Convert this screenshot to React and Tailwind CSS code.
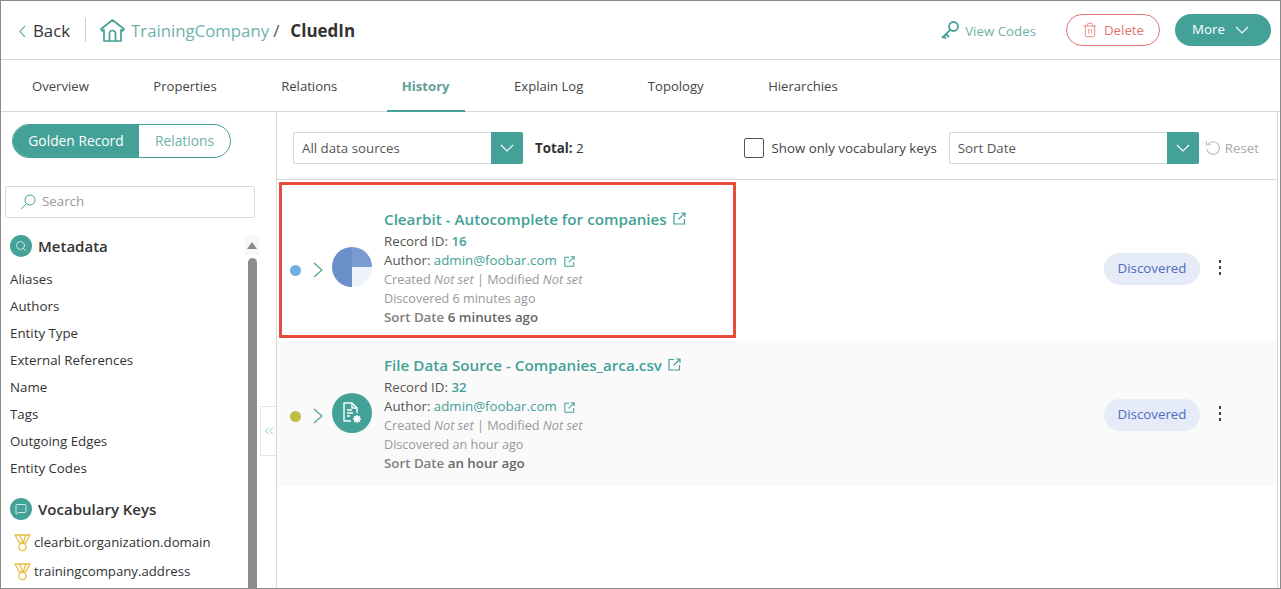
import React from "react";
import { Trash2, Search, MessageSquare, ChevronsLeft } from "lucide-react";

const TEAL = "#43a197";

function Chev({ d = "right", w = 10, h = 16, color = TEAL }) {
  const pts = {
    right: `1,1 ${w - 1},${h / 2} 1,${h - 1}`,
    left: `${w - 1},1 1,${h / 2} ${w - 1},${h - 1}`,
    down: `1,1 ${w / 2},${h - 1} ${w - 1},1`,
  }[d];
  return (
    <svg width={w} height={h} viewBox={`0 0 ${w} ${h}`} fill="none" stroke={color} strokeWidth="1.1" className="shrink-0">
      <polyline points={pts} />
    </svg>
  );
}

function Home() {
  return (
    <svg width="25" height="23" viewBox="0 0 25 23" fill="none" stroke={TEAL} strokeWidth="1.7" strokeLinejoin="round">
      <path d="M1 10 12.500 1 24 10l-1.300 1.900-1.700-1.100V22H4V10.800l-1.700 1.100z" />
      <path d="M9.500 22v-7.500a3 3 0 0 1 6 0V22" />
    </svg>
  );
}

function KeyIcon() {
  return (
    <svg width="19" height="20" viewBox="0 0 19 20" fill="none" stroke={TEAL} strokeWidth="1.8" strokeLinecap="round" className="shrink-0">
      <circle cx="12.500" cy="6.500" r="4.500" />
      <path d="M9.200 9.800 1.500 17.500M5 14l2.500 2.500M2.800 16.200l1.800 1.800" />
    </svg>
  );
}

function Undo() {
  return (
    <svg width="16" height="16" viewBox="0 0 16 16" fill="none" stroke="#bdbdbd" strokeWidth="1.1" className="shrink-0">
      <path d="M3 4.200A6.300 6.300 0 1 1 1.800 9" />
      <path d="M1.500 1v3.700h4" />
    </svg>
  );
}

function SearchGlass() {
  return (
    <svg width="16" height="16" viewBox="0 0 16 16" fill="none" stroke={TEAL} strokeWidth="1" className="shrink-0">
      <circle cx="10" cy="6" r="5" />
      <path d="M6.400 9.600 1 15" />
    </svg>
  );
}

function Medal() {
  return (
    <svg width="18" height="19" viewBox="0 0 18 19" fill="none" stroke="#e8bd45" strokeWidth="1.3" strokeLinejoin="round" className="shrink-0">
      <path d="M1 2h15l-4.500 8h-6z" />
      <path d="M5.500 2 9 10l3-8" />
      <circle cx="8.500" cy="14" r="3.700" />
    </svg>
  );
}

function Pie() {
  return (
    <svg width="40" height="40" viewBox="0 0 40 40">
      <circle cx="20" cy="20" r="20" fill="#eef3fa" />
      <path d="M20 20V0A20 20 0 0 0 20 40z" fill="#6b8fc9" />
      <path d="M20 20V0A20 20 0 0 1 40 20z" fill="#7b9ad0" />
    </svg>
  );
}

function FileGear() {
  return (
    <div className="w-10 h-10 rounded-full bg-[#43a197] flex items-center justify-center">
      <svg width="22" height="24" viewBox="0 0 22 24" fill="none" stroke="#ffffff" strokeWidth="1.4" strokeLinejoin="round">
        <path d="M10 20H3V2h8l5 5v5" />
        <path d="M11 2v5h5" />
        <path d="M6 9h5M6 12h6M6 15h3" />
        <circle cx="16" cy="18" r="2.200" fill="#ffffff" />
        <path d="M16 14v1.500M16 20.500V22M12 18h1.500M18.500 18H20M13.200 15.200l1 1M17.800 19.800l1 1M13.200 20.800l1-1M17.800 16.200l1-1" />
      </svg>
    </div>
  );
}

function SmallLink({ size = 13 }) {
  return (
    <svg width={size} height={size} viewBox="0 0 13 13" fill="none" stroke={TEAL} strokeWidth="1.2" className="shrink-0">
      <path d="M6 1.500H1V12h10.500V7" />
      <path d="M5.500 7.500 12 1M8 1h4v4" />
    </svg>
  );
}

function Row({ dot, icon, title, id, found, bg, cls }) {
  return (
    <div className={`flex items-center ${bg} ${cls}`}>
      <div className="w-6 mt-[6px] flex justify-end shrink-0">
        <span className="w-[11px] h-[11px] rounded-full" style={{ background: dot }} />
      </div>
      <span className="ml-3 mt-[6px] flex"><Chev /></span>
      <div className="ml-[9px] shrink-0 w-10 h-10">{icon}</div>
      <div className="ml-3 flex-1 flex flex-col text-[13.3px] leading-[19px]">
        <div className="flex items-center gap-[6px] text-[#43a197] text-[15.2px] font-semibold leading-[22px] mb-[2px]">
          {title}
          <SmallLink size={13} />
        </div>
        <div className="text-[#555]">Record ID: <span className="text-[#43a197] font-semibold">{id}</span></div>
        <div className="flex items-center text-[#555]">
          Author:&nbsp;<span className="text-[#43a197]">admin@foobar.com</span>
          <span className="ml-[7px] mt-[3px] flex"><SmallLink size={11} /></span>
        </div>
        <div className="text-[#999] text-[12.7px]">Created <i>Not set</i> | Modified <i>Not set</i></div>
        <div className="text-[#999] text-[12.6px]">Discovered {found}</div>
        <div className="font-semibold text-[#808080]">Sort Date <span className="text-[#666]">{found}</span></div>
      </div>
      <div className="mt-[3px] h-8 w-24 rounded-full bg-[#e6ebf8] text-[#4f6bc0] text-[13.3px] flex items-center justify-center shrink-0">Discovered</div>
      <div className="w-10 flex flex-col items-center gap-[3px] shrink-0">
        <span className="w-[2px] h-[3px] bg-[#444]" />
        <span className="w-[2px] h-[3px] bg-[#444]" />
        <span className="w-[2px] h-[3px] bg-[#444]" />
      </div>
      <div className="w-[37px] shrink-0" />
    </div>
  );
}

function Select({ label, w }) {
  return (
    <div className={`flex h-8 ${w} border border-[#d6dada] rounded-[2px] bg-white`}>
      <div className="flex-1 px-2 pt-[2px] flex items-center text-[13.3px] text-[#555]">{label}</div>
      <div className="w-8 bg-[#43a197] -my-px -mr-px rounded-r-[2px] flex items-center justify-center">
        <Chev d="down" w={14} h={8} color="#ffffff" />
      </div>
    </div>
  );
}

const meta = ["Aliases", "Authors", "Entity Type", "External References", "Name", "Tags", "Outgoing Edges", "Entity Codes"];
const tabs = ["Overview", "Properties", "Relations", "History", "Explain Log", "Topology", "Hierarchies"];

export default function App() {
  return (
    <div className="relative w-[1281px] h-[589px] overflow-hidden bg-white border border-[#8a8a8a] flex flex-col text-[#333]" style={{ fontFamily: '"Open Sans", "Noto Sans", sans-serif' }}>
      <header className="h-[59px] shrink-0 flex items-center border-b border-[#d9d9d9] pl-[18px] pr-[9px]">
        <span className="flex mt-[3px]"><Chev d="left" w={7} h={13} /></span>
        <span className="ml-[7px] mt-[2px] text-[16.800px] text-[#333]">Back</span>
        <span className="ml-[15px] w-px h-6 bg-[#d0d0d0]" />
        <span className="ml-[14px] flex"><Home /></span>
        <span className="ml-[6px] mt-[2px] text-[16.800px] text-[#6fb1aa]">TrainingCompany</span>
        <span className="ml-[4px] mt-[2px] text-[17px] text-[#555]">/</span>
        <span className="ml-[11px] mt-[2px] text-[17px] font-bold text-[#333]">CluedIn</span>
        <div className="flex-1" />
        <KeyIcon />
        <span className="ml-[5px] mt-[3px] text-[13.3px] text-[#6fb1aa]">View Codes</span>
        <button className="ml-[30px] w-[94px] h-8 rounded-full border border-[#e57373] text-[#e57373] text-[13.3px] flex items-center justify-center gap-[6px]">
          <Trash2 className="w-4 h-4" strokeWidth={1.2} /><span className="mt-[2px]">Delete</span>
        </button>
        <button className="ml-[15px] w-24 h-8 rounded-full bg-[#43a197] text-white text-[13.3px] font-medium flex items-center pl-[17px] gap-[10px]">
          More<Chev d="down" w={14} h={8} color="#ffffff" />
        </button>
      </header>

      <nav className="h-[52px] shrink-0 flex border-b border-[#d9d9d9] text-[13.100px] text-[#444] pt-[2px]">
        {tabs.map((t) => {
          const active = t === "History";
          return (
            <div key={t} className={`px-[15px] mr-[34.5px] first:ml-4 flex items-center relative ${active ? "font-bold text-[#5f9e97]" : ""}`}>
              {t}
              {active && <span className="absolute left-0 right-0 bottom-[-1px] h-[2px] bg-[#43a197]" />}
            </div>
          );
        })}
      </nav>

      <div className="flex-1 flex min-h-0">
        <aside className="w-[276px] shrink-0 border-r border-[#d9d9d9] relative flex flex-col overflow-hidden">
          <div className="mt-[12px] ml-[11px] flex h-[34px] w-[219px] rounded-full border border-[#43a197] overflow-hidden text-[13.8px]">
            <div className="w-[126px] bg-[#43a197] text-white flex items-center justify-center">Golden Record</div>
            <div className="flex-1 text-[#6fb1aa] flex items-center justify-center">Relations</div>
          </div>
          <div className="mt-[28px] ml-[4px] w-[250px] h-[32px] shrink-0 border border-[#d6dada] rounded-[2px] flex items-center pl-[14px]">
            <SearchGlass />
            <span className="ml-[6px] text-[13.3px] text-[#999]">Search</span>
          </div>
          <div className="flex flex-1 min-h-0 mt-[17px] pl-[9px]">
            <div className="flex-1 min-w-0">
              <div className="flex items-center gap-[6px]">
                <span className="w-[22px] h-[22px] rounded-full bg-[#43a197] flex items-center justify-center">
                  <Search className="w-3 h-3 text-white" strokeWidth={1.5} />
                </span>
                <span className="text-[15px] font-semibold text-[#333]">Metadata</span>
              </div>
              <ul className="mt-[9px] text-[13.3px] text-[#333]">
                {meta.map((m) => <li key={m} className="h-[27px] flex items-center">{m}</li>)}
              </ul>
              <div className="mt-[15px] flex items-center gap-[6px]">
                <span className="w-[22px] h-[22px] rounded-full bg-[#43a197] flex items-center justify-center">
                  <MessageSquare className="w-3 h-3 text-white" strokeWidth={1.5} />
                </span>
                <span className="text-[15px] font-semibold text-[#333]">Vocabulary Keys</span>
              </div>
              <ul className="mt-[8px] text-[13.2px] text-[#333]">
                {["clearbit.organization.domain", "trainingcompany.address"].map((m) => (
                  <li key={m} className="h-[29px] flex items-center gap-[2px] pl-[4px]"><Medal />{m}</li>
                ))}
              </ul>
            </div>
            <div className="w-[14px] mr-[17px] flex flex-col items-center">
              <div className="h-[20px] w-full shrink-0 bg-[#f8f8f8] flex items-center justify-center">
                <span className="w-0 h-0 border-l-[5px] border-r-[5px] border-b-[7px] border-l-transparent border-r-transparent border-b-[#8c8c8c]" />
              </div>
              <span className="mt-[3px] flex-1 w-[9px] rounded-t-full bg-[#8c8c8c]" />
            </div>
          </div>
          <div className="absolute right-0 top-[294px] w-[16px] h-[50px] border border-r-0 border-[#e6e6e6] bg-white flex items-center justify-center">
            <ChevronsLeft className="w-[14px] h-[14px] text-[#43a197]" strokeWidth={1} />
          </div>
        </aside>

        <main className="flex-1 flex flex-col min-w-0 border-r border-[#d9d9d9] mr-[2px]">
          <div className="h-[68px] shrink-0 flex items-center border-b border-[#d9d9d9] pl-4 pt-[4px] text-[13.3px]">
            <Select label="All data sources" w="w-[230px]" />
            <span className="ml-[12px] mt-[2px]"><b className="font-bold text-[#333]">Total:</b> 2</span>
            <div className="flex-1" />
            <span className="w-5 h-5 border border-[#555] rounded-[2px]" />
            <span className="ml-2 mt-[2px] text-[#444]">Show only vocabulary keys</span>
            <span className="ml-3"><Select label="Sort Date" w="w-[250px]" /></span>
            <span className="ml-[6px] flex"><Undo /></span>
            <span className="ml-[4px] mr-[18px] mt-[2px] text-[#aaa]">Reset</span>
          </div>
          <Row dot="#6fb0e0" icon={<Pie />} title="Clearbit - Autocomplete for companies" id="16" found="6 minutes ago" bg="bg-white" cls="h-[160px] pt-[14px]" />
          <Row dot="#bfbd45" icon={<FileGear />} title="File Data Source - Companies_arca.csv" id="32" found="an hour ago" bg="bg-[#fafafa]" cls="h-[146px]" />
        </main>
      </div>

      <div className="absolute left-[278px] top-[181px] w-[457px] h-[156px] border-[3px] border-[#e74c3c]" />
    </div>
  );
}
